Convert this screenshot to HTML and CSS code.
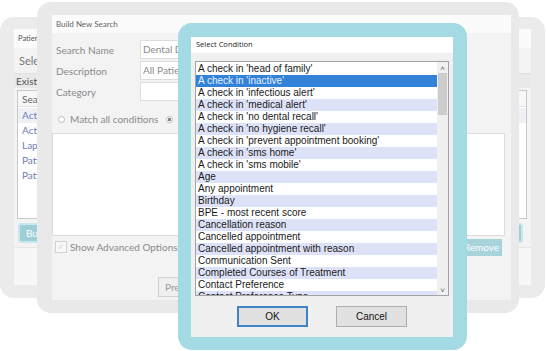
FILE: index.html
```html
<!DOCTYPE html>
<html lang="en">
<head>
    <meta charset="UTF-8">
    <meta name="viewport" content="width=device-width, initial-scale=1.0">
    <title>Select Condition</title>
    <link rel="stylesheet" href="styles.css">
</head>
<body>
    <div class="stage">

        <!-- back window: patient search -->
        <div class="win win-back">
            <div class="panel">
                <div class="title-strip">Patient Search</div>
                <div class="select-row">Select a search</div>
                <div class="tab-bar">Existing Searches</div>
                <div class="search-list">
                    <div class="list-head">Search Name</div>
                    <div class="list-item active">Active patients</div>
                    <div class="list-item">Active patients with recall</div>
                    <div class="list-item">Lapsed patients</div>
                    <div class="list-item">Patients with birthday</div>
                    <div class="list-item">Patients due recall</div>
                </div>
                <div class="back-buttons">
                    <button class="teal-btn">Build Search</button>
                    <button class="teal-btn">Delete</button>
                </div>
                <div class="back-footer"></div>
            </div>
        </div>

        <!-- middle window: build new search -->
        <div class="win win-mid">
            <div class="panel">
                <div class="title-strip">Build New Search</div>
                <div class="form">
                    <div class="form-row">
                        <label>Search Name</label>
                        <div class="input">Dental Database</div>
                    </div>
                    <div class="form-row">
                        <label>Description</label>
                        <div class="input">All Patients</div>
                    </div>
                    <div class="form-row">
                        <label>Category</label>
                        <div class="input"></div>
                    </div>
                </div>
                <div class="radio-row">
                    <span class="radio"></span><span class="radio-label">Match all conditions</span>
                    <span class="radio checked"></span><span class="radio-label">Match any condition</span>
                </div>
                <div class="conditions-box"></div>
                <div class="options-row">
                    <span class="checkbox">&#10003;</span>
                    <span class="option-label">Show Advanced Options</span>
                    <span class="spacer"></span>
                    <button class="flat-teal">Add</button>
                    <button class="flat-teal">Remove</button>
                </div>
                <div class="mid-footer">
                    <button class="grey-btn">Preview</button>
                    <button class="grey-btn">Save</button>
                </div>
            </div>
        </div>

        <!-- front window: select condition -->
        <div class="win win-front">
            <div class="panel panel-front">
                <div class="title-strip dark">Select Condition</div>
                <div class="listbox">
                    <div class="rows" id="rows"></div>
                    <div class="scrollbar">
                        <div class="arrow">&#708;</div>
                        <div class="thumb"></div>
                        <div class="track"></div>
                        <div class="arrow">&#709;</div>
                    </div>
                </div>
                <div class="dialog-buttons">
                    <button class="dlg-btn default">OK</button>
                    <button class="dlg-btn">Cancel</button>
                </div>
            </div>
        </div>

    </div>

    <script>
        const conditions = [
            "A check in 'head of family'",
            "A check in 'inactive'",
            "A check in 'infectious alert'",
            "A check in 'medical alert'",
            "A check in 'no dental recall'",
            "A check in 'no hygiene recall'",
            "A check in 'prevent appointment booking'",
            "A check in 'sms home'",
            "A check in 'sms mobile'",
            "Age",
            "Any appointment",
            "Birthday",
            "BPE - most recent score",
            "Cancellation reason",
            "Cancelled appointment",
            "Cancelled appointment with reason",
            "Communication Sent",
            "Completed Courses of Treatment",
            "Contact Preference",
            "Contact Preference Type"
        ];

        const rows = document.getElementById('rows');
        conditions.forEach((text, i) => {
            const row = document.createElement('div');
            row.className = 'row';
            if (i % 2 === 1) row.className += ' alt';
            if (i === 1) row.className += ' selected';
            row.textContent = text;
            rows.appendChild(row);
        });
    </script>
</body>
</html>
```

FILE: styles.css
```css
* {
    box-sizing: border-box;
}

body {
    margin: 0;
    background: #ffffff;
    font-family: Lato, 'Open Sans', sans-serif;
}

.stage {
    position: relative;
    width: 546px;
    height: 351px;
    overflow: hidden;
}

button {
    font-family: inherit;
    cursor: pointer;
}

.win {
    position: absolute;
    border-radius: 14px;
}

.panel {
    height: 100%;
    display: flex;
    flex-direction: column;
    background: #f3f3f3;
    overflow: hidden;
}

.title-strip {
    height: 18px;
    flex-shrink: 0;
    background: #fbfbfb;
    color: #666;
    font-size: 8px;
    line-height: 18px;
    padding-left: 4px;
}

.title-strip.dark {
    height: 16px;
    line-height: 15px;
    background: #ffffff;
    color: #222;
    padding-left: 5px;
    font-family: 'Open Sans', sans-serif;
    font-size: 7.5px;
}

/* back window */

.win-back {
    left: 0;
    top: 17px;
    width: 545px;
    height: 281px;
    padding: 12px 14px 13px 14px;
    background: #ebebeb;
}

.win-back .title-strip {
    height: 19px;
    line-height: 19px;
    font-size: 7.5px;
    color: #555;
}

.select-row {
    height: 25px;
    line-height: 25px;
    padding-left: 5px;
    font-size: 11px;
    color: #777;
}

.tab-bar {
    height: 15px;
    line-height: 15px;
    padding-left: 2px;
    background: #e8e8e8;
    border-top: 1px solid #e0e0e0;
    font-size: 10px;
    color: #555;
}

.search-list {
    margin: 2px 4px 0 3px;
    height: 129px;
    background: #fff;
    border: 1px solid #c9c9c9;
}

.list-head {
    height: 16px;
    line-height: 16px;
    padding-left: 4px;
    font-size: 10px;
    color: #666;
    background: #f7f7f7;
    border-bottom: 1px solid #e2e2e2;
    margin-bottom: 1px;
}

.list-item {
    height: 15px;
    line-height: 14px;
    padding-left: 4px;
    font-size: 10px;
    color: #6d7db5;
}

.list-item.active {
    background: #eef0f6;
}

.back-buttons {
    display: flex;
    justify-content: space-between;
    padding: 4px 8px 0 4px;
}

.teal-btn {
    height: 20px;
    padding: 0 6px;
    border: 2px solid #c7e8ee;
    border-radius: 3px;
    background: #9ecfd6;
    color: #fff;
    font-size: 10px;
}

.back-footer {
    flex: 1;
    margin-top: 4px;
    background: #f7f7f7;
    border-top: 1px solid #e6e6e6;
}

/* middle window */

.win-mid {
    left: 37px;
    top: 2px;
    width: 482px;
    height: 311px;
    padding: 13px 8px 13px 15px;
    background: #e9e9e9;
}

.form {
    display: flex;
    flex-direction: column;
    gap: 2px;
    padding-top: 7px;
}

.form-row {
    display: flex;
    align-items: center;
    height: 19px;
}

.form-row label {
    width: 88px;
    padding-left: 4px;
    font-size: 10px;
    color: #8a8a8a;
}

.input {
    width: 300px;
    height: 19px;
    line-height: 17px;
    padding-left: 2px;
    background: #fff;
    border: 1px solid #dcdcdc;
    font-size: 10px;
    color: #8a8a8a;
}

.radio-row {
    display: flex;
    align-items: center;
    height: 16px;
    margin-top: 10px;
    padding-left: 6px;
    font-size: 10px;
    color: #8a8a8a;
}

.radio {
    width: 7px;
    height: 7px;
    border: 1px solid #bbb;
    border-radius: 50%;
    background: #fff;
    margin-right: 5px;
}

.radio.checked {
    background: radial-gradient(circle, #888 0 1.5px, #fff 2px);
}

.radio-label {
    margin-right: 8px;
}

.conditions-box {
    height: 103px;
    margin-top: 6px;
    margin-right: 6px;
    background: #fff;
    border: 1px solid #dcdcdc;
}

.options-row {
    display: flex;
    align-items: center;
    height: 18px;
    margin-top: 2px;
    padding: 0 9px 0 3px;
}

.checkbox {
    width: 12px;
    height: 12px;
    border: 1px solid #d2d2d2;
    background: #f8f8f8;
    color: #d4d4d4;
    font-size: 9px;
    line-height: 10px;
    text-align: center;
    margin-right: 3px;
}

.option-label {
    font-size: 10px;
    color: #8a8a8a;
}

.spacer {
    flex: 1;
}

.flat-teal {
    height: 17px;
    margin-left: 6px;
    padding: 0 3px;
    border: none;
    background: #a6d4da;
    color: #fff;
    font-size: 10px;
}

.mid-footer {
    display: flex;
    gap: 6px;
    padding-left: 106px;
    margin-top: 21px;
}

.grey-btn {
    height: 20px;
    padding: 0 6px;
    background: #efefef;
    border: 1px solid #cfcfcf;
    color: #999;
    font-size: 10px;
}

/* front window */

.win-front {
    left: 178px;
    top: 23px;
    width: 289px;
    height: 327px;
    padding: 14px 14px 13px 13px;
    background: #a3dae4;
}

.panel-front {
    background: #f0f0f0;
    font-family: 'Liberation Sans', Arial, sans-serif;
}

.listbox {
    display: flex;
    height: 235px;
    margin: 8px 4px 0 4px;
    background: #fff;
    border: 1px solid #a3a3a3;
    overflow: hidden;
}

.rows {
    flex: 1;
    padding-top: 1px;
    overflow: hidden;
}

.row {
    height: 12px;
    line-height: 12px;
    padding-left: 2px;
    font-size: 10px;
    color: #1a1a1a;
    white-space: nowrap;
}

.row.alt {
    background: #dee2f8;
}

.row.selected {
    background: #3282d8;
    color: #e8f0ff;
}

.scrollbar {
    width: 11px;
    display: flex;
    flex-direction: column;
    background: #f0f0f0;
}

.arrow {
    height: 11px;
    line-height: 13px;
    text-align: center;
    font-size: 8px;
    color: #606060;
}

.thumb {
    height: 42px;
    margin: 0 1px;
    background: #cdcdcd;
}

.track {
    flex: 1;
}

.dialog-buttons {
    display: flex;
    justify-content: center;
    gap: 28px;
    margin-top: 10px;
}

.dlg-btn {
    width: 71px;
    height: 21px;
    background: #e1e1e1;
    border: 1px solid #adadad;
    color: #111;
    font-family: 'Liberation Sans', Arial, sans-serif;
    font-size: 10px;
}

.dlg-btn.default {
    border: 2px solid #3d85c8;
}
```
